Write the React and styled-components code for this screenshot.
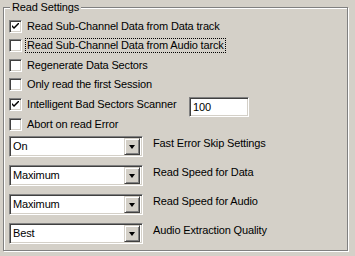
import styled, { createGlobalStyle } from 'styled-components';

const Global = createGlobalStyle`
  body {
    margin: 0;
    background: #d4d0c8;
    font-family: "Liberation Sans", Arial, sans-serif;
    font-size: 11px;
    letter-spacing: -0.15px;
    color: #000;
  }
`;

const Page = styled.div`
  width: 355px;
  height: 256px;
  padding: 7px 0 0 3px;
  box-sizing: border-box;
  background: #d4d0c8;
`;

// etched group box: gray line with a white one offset by 1px
const Group = styled.div`
  position: relative;
  width: 345px;
  height: 244px;
  box-sizing: border-box;
  border: 1px solid #808080;
  box-shadow: 1px 1px 0 #fff, inset 1px 1px 0 #fff;
  padding: 8px 0 0 5px;
`;

const Legend = styled.span`
  position: absolute;
  top: -7px;
  left: 6px;
  padding: 0 2px;
  background: #d4d0c8;
  line-height: 13px;
`;

const CheckRow = styled.div`
  display: flex;
  align-items: center;
  height: ${(p) => p.$h}px;
`;

const Box = styled.span`
  width: 13px;
  height: 13px;
  box-sizing: border-box;
  flex: none;
  background: #fff;
  border-style: solid;
  border-width: 1px;
  border-color: #808080 #fff #fff #808080;
  box-shadow: inset 1px 1px 0 #404040, inset -1px -1px 0 #d4d0c8;
  display: flex;
  align-items: center;
  justify-content: center;
  margin-right: 5px;
`;

const Label = styled.span`
  line-height: 13px;
  padding: 0 1px;
  margin-left: -1px;
  outline: ${(p) => (p.$focus ? '1px dotted #000' : 'none')};
`;

const Edit = styled.div`
  width: 60px;
  height: 20px;
  box-sizing: border-box;
  align-self: flex-start;
  margin: 3px 98px 0 auto;
  background: #fff;
  border-style: solid;
  border-width: 1px;
  border-color: #808080 #fff #fff #808080;
  box-shadow: inset 1px 1px 0 #404040, inset -1px -1px 0 #d4d0c8;
  padding: 3px 0 0 3px;
  line-height: 13px;
`;

const SelectRows = styled.div`
  display: flex;
  flex-direction: column;
  gap: 8px;
  margin-top: 2px;
`;

const SelectRow = styled.div`
  display: flex;
  align-items: flex-start;
  gap: 10px;
`;

const Select = styled.div`
  width: 134px;
  height: 21px;
  box-sizing: border-box;
  flex: none;
  display: flex;
  align-items: center;
  background: #fff;
  border-style: solid;
  border-width: 1px;
  border-color: #808080 #fff #fff #808080;
  box-shadow: inset 1px 1px 0 #404040, inset -1px -1px 0 #d4d0c8;
  padding: 2px 2px 2px 3px;
`;

const Value = styled.span`
  flex: 1;
  line-height: 13px;
`;

const DropButton = styled.span`
  width: 16px;
  height: 17px;
  box-sizing: border-box;
  background: #d4d0c8;
  border-style: solid;
  border-width: 1px;
  border-color: #d4d0c8 #404040 #404040 #d4d0c8;
  box-shadow: inset 1px 1px 0 #fff, inset -1px -1px 0 #808080;
  display: flex;
  align-items: center;
  justify-content: center;
`;

const Arrow = styled.span`
  width: 0;
  height: 0;
  border-left: 3.5px solid transparent;
  border-right: 3.5px solid transparent;
  border-top: 4px solid #000;
`;

const SelectLabel = styled.span`
  line-height: 14px;
  white-space: nowrap;
`;

function Check({ checked }) {
  return (
    <Box>
      {checked && (
        <svg width="7" height="7" viewBox="0 0 7 7">
          <path d="M0 2 L0 4 L2 6 L7 1 L7 -1 L2 4 Z" fill="#000" />
        </svg>
      )}
    </Box>
  );
}

const checks = [
  { text: 'Read Sub-Channel Data from Data track', checked: true, h: 20 },
  { text: 'Read Sub-Channel Data from Audio tarck', focus: true, h: 19 },
  { text: 'Regenerate Data Sectors', h: 20 },
  { text: 'Only read the first Session', h: 19 },
  { text: 'Intelligent Bad Sectors Scanner', checked: true, edit: '100', h: 20 },
  { text: 'Abort on read Error', h: 20 },
];

const selects = [
  { value: 'On', label: 'Fast Error Skip Settings' },
  { value: 'Maximum', label: 'Read Speed for Data' },
  { value: 'Maximum', label: 'Read Speed for Audio' },
  { value: 'Best', label: 'Audio Extraction Quality' },
];

export default function App() {
  return (
    <Page>
      <Global />
      <Group>
        <Legend>Read Settings</Legend>
        {checks.map((c) => (
          <CheckRow key={c.text} $h={c.h}>
            <Check checked={c.checked} />
            <Label $focus={c.focus}>{c.text}</Label>
            {c.edit && <Edit>{c.edit}</Edit>}
          </CheckRow>
        ))}
        <SelectRows>
          {selects.map((s) => (
            <SelectRow key={s.label}>
              <Select>
                <Value>{s.value}</Value>
                <DropButton>
                  <Arrow />
                </DropButton>
              </Select>
              <SelectLabel>{s.label}</SelectLabel>
            </SelectRow>
          ))}
        </SelectRows>
      </Group>
    </Page>
  );
}
